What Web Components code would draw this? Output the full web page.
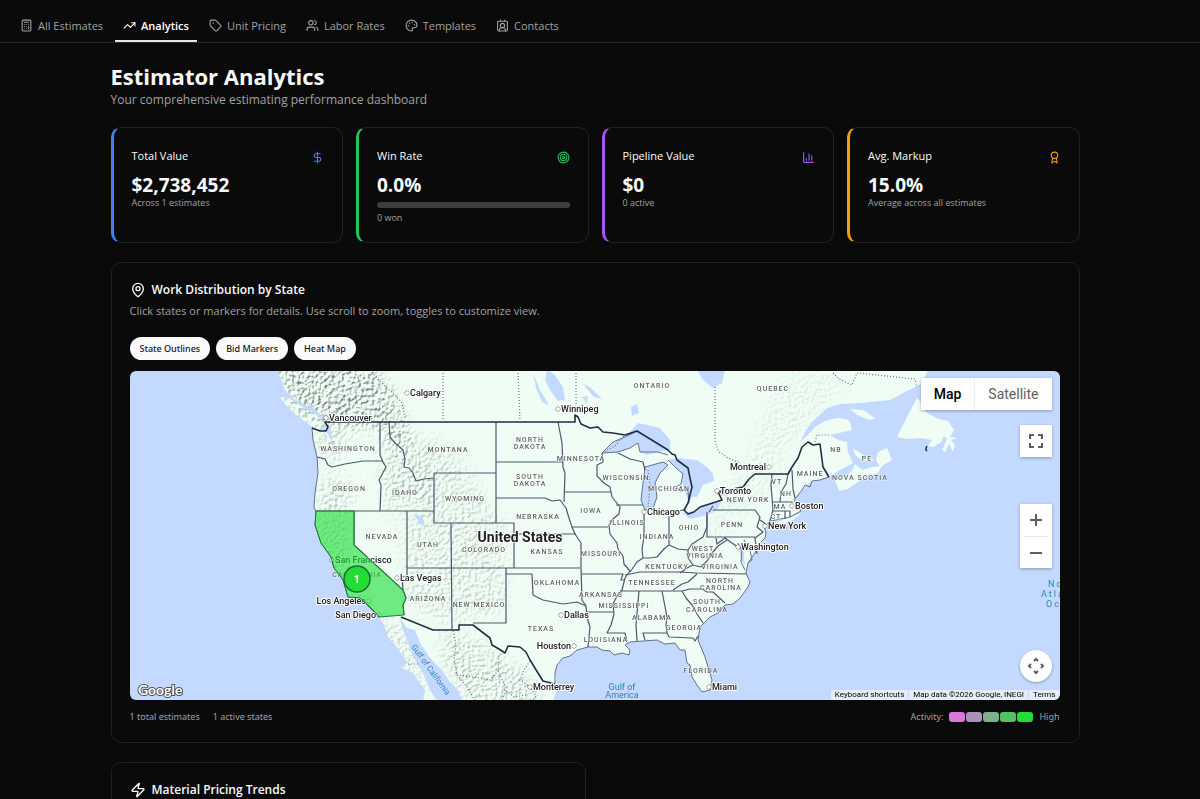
<!DOCTYPE html>
<html lang="en">
  <head>
    <meta charset="utf-8" />
    <meta name="viewport" content="width=device-width, initial-scale=1" />
    <title>Estimator Analytics</title>
    <style>
      body {
        margin: 0;
        height: 100vh;
        overflow: hidden;
        background: #0a0a0a;
        color: #fafafa;
        font-family: "Open Sans", "Noto Sans", sans-serif;
      }
    </style>
  </head>
  <body>
    <app-nav>
      <nav-tab icon="calculator">All Estimates</nav-tab>
      <nav-tab icon="trending-up" active>Analytics</nav-tab>
      <nav-tab icon="tag">Unit Pricing</nav-tab>
      <nav-tab icon="users">Labor Rates</nav-tab>
      <nav-tab icon="palette">Templates</nav-tab>
      <nav-tab icon="contact">Contacts</nav-tab>
    </app-nav>

    <analytics-page>
      <span slot="title">Estimator Analytics</span>
      <span slot="subtitle">Your comprehensive estimating performance dashboard</span>

      <stat-card slot="stats" icon="dollar" style="--accent: #3b82f6" label="Total Value" value="$2,738,452">Across 1 estimates</stat-card>
      <stat-card slot="stats" icon="target" style="--accent: #22c55e" label="Win Rate" value="0.0%" progress="0">0 won</stat-card>
      <stat-card slot="stats" icon="chart" style="--accent: #a855f7" label="Pipeline Value" value="$0">0 active</stat-card>
      <stat-card slot="stats" icon="award" style="--accent: #f59e0b" label="Avg. Markup" value="15.0%">Average across all estimates</stat-card>

      <panel-card icon="map-pin" heading="Work Distribution by State">
        <span slot="description">Click states or markers for details. Use scroll to zoom, toggles to customize view.</span>
        <work-map></work-map>
      </panel-card>

      <panel-card slot="half" icon="zap" heading="Material Pricing Trends"></panel-card>
    </analytics-page>

    <script>
      const ICONS = {
        'calculator': '<rect width="16" height="20" x="4" y="2" rx="2"/><path d="M8 6h8M16 14v4M16 10h.01M12 10h.01M8 10h.01M12 14h.01M8 14h.01M12 18h.01M8 18h.01"/>',
        'trending-up': '<path d="m22 7-8.5 8.5-5-5L2 17"/><path d="M16 7h6v6"/>',
        'tag': '<path d="M12.586 2.586A2 2 0 0 0 11.172 2H4a2 2 0 0 0-2 2v7.172a2 2 0 0 0 .586 1.414l8.704 8.704a2.426 2.426 0 0 0 3.42 0l6.58-6.58a2.426 2.426 0 0 0 0-3.42z"/><circle cx="7.500" cy="7.500" r=".5" fill="currentColor"/>',
        'users': '<path d="M16 21v-2a4 4 0 0 0-4-4H6a4 4 0 0 0-4 4v2"/><circle cx="9" cy="7" r="4"/><path d="M22 21v-2a4 4 0 0 0-3-3.870M16 3.130a4 4 0 0 1 0 7.750"/>',
        'palette': '<path d="M12 22a1 1 0 0 1 0-20 10 9 0 0 1 10 9 5 5 0 0 1-5 5h-2.250a1.750 1.750 0 0 0-1.400 2.800l.3.400a1.750 1.750 0 0 1-1.400 2.800z"/><circle cx="13.500" cy="6.500" r=".5" fill="currentColor"/><circle cx="17.500" cy="10.500" r=".5" fill="currentColor"/><circle cx="6.500" cy="12.500" r=".5" fill="currentColor"/><circle cx="8.500" cy="7.500" r=".5" fill="currentColor"/>',
        'contact': '<path d="M16 2v2M8 2v2M17.915 22a6 6 0 0 0-12 0"/><circle cx="12" cy="12" r="4"/><rect x="3" y="4" width="18" height="18" rx="2"/>',
        'dollar': '<path d="M12 2v20M17 5H9.500a3.500 3.500 0 0 0 0 7h5a3.500 3.500 0 0 1 0 7H6"/>',
        'target': '<circle cx="12" cy="12" r="10"/><circle cx="12" cy="12" r="6"/><circle cx="12" cy="12" r="2"/>',
        'chart': '<path d="M3 3v16a2 2 0 0 0 2 2h16M18 17V9M13 17V5M8 17v-3"/>',
        'award': '<path d="m15.477 12.890 1.515 8.526a.5.5 0 0 1-.81.470l-3.580-2.687a1 1 0 0 0-1.197 0l-3.586 2.686a.5.5 0 0 1-.81-.469l1.514-8.526"/><circle cx="12" cy="8" r="6"/>',
        'map-pin': '<path d="M20 10c0 4.993-5.539 10.193-7.399 11.799a1 1 0 0 1-1.202 0C9.539 20.193 4 14.993 4 10a8 8 0 0 1 16 0"/><circle cx="12" cy="10" r="3"/>',
        'zap': '<path d="M4 14a1 1 0 0 1-.78-1.630l9.900-10.200a.5.5 0 0 1 .86.460l-1.920 6.020A1 1 0 0 0 13 10h7a1 1 0 0 1 .78 1.630l-9.900 10.200a.5.5 0 0 1-.86-.460l1.920-6.020A1 1 0 0 0 11 14z"/>',
      };

      class UiIcon extends HTMLElement {
        constructor() {
          super();
          this.attachShadow({mode: 'open'}).innerHTML = `
            <style>
              :host { display: block; width: 13px; height: 13px; flex: none; }
              svg { display: block; width: 100%; height: 100%; }
            </style>
            <svg viewBox="0 0 24 24" fill="none" stroke="currentColor" stroke-width="2"
                 stroke-linecap="round" stroke-linejoin="round" aria-hidden="true">
              ${ICONS[this.getAttribute('name')] || ''}
            </svg>
          `;
        }
      }

      class AppNav extends HTMLElement {
        constructor() {
          super();
          this.attachShadow({mode: 'open'}).innerHTML = `
            <style>
              :host { display: block; border-bottom: 1px solid #262626; }
              nav { display: flex; gap: 4px; padding: 11px 12px 0; }
            </style>
            <nav><slot></slot></nav>
          `;
        }
      }

      class NavTab extends HTMLElement {
        constructor() {
          super();
          this.attachShadow({mode: 'open'}).innerHTML = `
            <style>
              :host { display: block; }
              a {
                display: flex;
                align-items: center;
                gap: 5px;
                height: 29px;
                padding: 0 8px;
                border-bottom: 2px solid transparent;
                color: #a1a1a1;
                font-size: 11px;
                font-weight: 500;
                line-height: 16px;
                text-decoration: none;
                white-space: nowrap;
              }
              :host([active]) a { color: #fff; font-weight: 600; border-color: #e5e5e5; }
            </style>
            <a href="#"><ui-icon name="${this.getAttribute('icon')}"></ui-icon><slot></slot></a>
          `;
        }
      }

      class AnalyticsPage extends HTMLElement {
        constructor() {
          super();
          this.attachShadow({mode: 'open'}).innerHTML = `
            <style>
              :host { display: block; padding: 18px 26px 20px 16px; }
              main { max-width: 969px; margin: 0 auto; }
              header { margin-bottom: 18px; }
              h1 { margin: 0; font-size: 22px; line-height: 30px; font-weight: 700; }
              p { margin: 0; font-size: 12px; line-height: 18px; color: #a1a1a1; }
              .stats { display: grid; grid-template-columns: repeat(4, 1fr); gap: 13px; margin-bottom: 19px; }
              .halves { display: grid; grid-template-columns: 1fr 1fr; gap: 19px; margin-top: 19px; }
            </style>
            <main>
              <header>
                <h1><slot name="title"></slot></h1>
                <p><slot name="subtitle"></slot></p>
              </header>
              <section class="stats"><slot name="stats"></slot></section>
              <slot></slot>
              <div class="halves"><slot name="half"></slot></div>
            </main>
          `;
        }
      }

      class StatCard extends HTMLElement {
        constructor() {
          super();
          const bar = this.hasAttribute('progress')
            ? `<div class="bar" role="progressbar" aria-label="Win rate" aria-valuenow="${this.getAttribute('progress')}"></div>`
            : '';
          this.attachShadow({mode: 'open'}).innerHTML = `
            <style>
              :host {
                display: block;
                box-sizing: border-box;
                min-height: 116px;
                padding: 19px 18px 18px;
                border: 1px solid #212121;
                border-left: 3px solid var(--accent);
                border-radius: 10px;
              }
              .top { display: flex; justify-content: space-between; }
              h3 { margin: 0; font-size: 11px; line-height: 18px; font-weight: 500; }
              ui-icon { margin-top: 4px; color: var(--accent); }
              .value { margin-top: 8px; font-size: 19px; line-height: 24px; font-weight: 700; }
              .bar { height: 6px; margin: 5px 0 4px; border-radius: 3px; background: #3d3d3d; }
              .note { font-size: 9px; line-height: 12px; color: #a1a1a1; }
            </style>
            <div class="top">
              <h3>${this.getAttribute('label')}</h3>
              <ui-icon name="${this.getAttribute('icon')}"></ui-icon>
            </div>
            <div class="value">${this.getAttribute('value')}</div>
            ${bar}
            <div class="note"><slot></slot></div>
          `;
        }
      }

      class PanelCard extends HTMLElement {
        constructor() {
          super();
          this.attachShadow({mode: 'open'}).innerHTML = `
            <style>
              :host {
                display: block;
                padding: 18px 19px 18px 18px;
                border: 1px solid #212121;
                border-radius: 10px;
              }
              h2 {
                display: flex;
                align-items: center;
                gap: 6px;
                margin: 0;
                font-size: 12px;
                line-height: 18px;
                font-weight: 600;
              }
              ui-icon { width: 16px; height: 16px; }
              p { margin: 3px 0 17px; font-size: 11px; line-height: 18px; color: #a1a1a1; }
            </style>
            <h2><ui-icon name="${this.getAttribute('icon')}"></ui-icon>${this.getAttribute('heading')}</h2>
            <p><slot name="description"></slot></p>
            <slot></slot>
          `;
        }
      }

      class WorkMap extends HTMLElement {
        constructor() {
          super();
          this.attachShadow({mode: 'open'}).innerHTML = `
            <style>
              :host { display: block; }
              .toggles { display: flex; gap: 6px; margin-bottom: 11px; }
              .toggles button {
                height: 23px;
                padding: 0 10px;
                border: 0;
                border-radius: 12px;
                background: #fafafa;
                color: #171717;
                font: 500 9px "Noto Sans", sans-serif;
              }
              footer {
                display: flex;
                align-items: center;
                gap: 13px;
                margin-top: 9px;
                font-family: "Noto Sans", sans-serif;
                font-size: 9px;
                line-height: 15px;
                color: #a1a1a1;
              }
              .legend { display: flex; align-items: center; gap: 6px; margin-left: auto; }
              .swatches { display: flex; gap: 1px; }
              .swatches i { width: 16px; height: 10px; border-radius: 3px; }
            </style>
            <div class="toggles">
              <button type="button" aria-pressed="true">State Outlines</button>
              <button type="button" aria-pressed="true">Bid Markers</button>
              <button type="button" aria-pressed="true">Heat Map</button>
            </div>
            <us-map></us-map>
            <footer>
              <span>1 total estimates</span>
              <span>1 active states</span>
              <div class="legend">
                <span>Activity:</span>
                <div class="swatches">
                  <i style="background: #d977dc"></i>
                  <i style="background: #ad90b6"></i>
                  <i style="background: #7fae8c"></i>
                  <i style="background: #52c263"></i>
                  <i style="background: #22dd33"></i>
                </div>
                <span>High</span>
              </div>
            </footer>
          `;
        }
      }

      // Label tables: text, x, y. Cities also carry the side their dot is on.
      const STATES = [
        ['WASHINGTON', 348, 451], ['OREGON', 349, 491], ['IDAHO', 405, 495], ['MONTANA', 448, 452],
        ['WYOMING', 465, 501], ['NEVADA', 382, 539], ['UTAH', 428, 547], ['COLORADO', 484, 552],
        ['CALIFORNIA', 357, 577], ['ARIZONA', 428, 601], ['NEW MEXICO', 479, 607], ['NORTH', 530, 442],
        ['DAKOTA', 530, 449], ['SOUTH', 530, 479], ['DAKOTA', 530, 486], ['NEBRASKA', 538, 519],
        ['KANSAS', 547, 554], ['OKLAHOMA', 557, 585], ['TEXAS', 541, 631], ['MINNESOTA', 581, 461],
        ['IOWA', 591, 513], ['MISSOURI', 601, 556], ['ARKANSAS', 601, 597], ['LOUISIANA', 606, 642],
        ['WISCONSIN', 626, 480], ['ILLINOIS', 627, 525], ['MICHIGAN', 669, 491], ['INDIANA', 657, 539],
        ['OHIO', 689, 530], ['KENTUCKY', 667, 569], ['TENNESSEE', 652, 585], ['MISSISSIPPI', 624, 608],
        ['ALABAMA', 652, 620], ['GEORGIA', 684, 630], ['FLORIDA', 701, 673], ['SOUTH', 707, 604],
        ['CAROLINA', 707, 612], ['NORTH', 720, 583], ['CAROLINA', 721, 590], ['WEST', 703, 551],
        ['VIRGINIA', 705, 558], ['VIRGINIA', 720, 569], ['PENN', 732, 527], ['NEW YORK', 748, 502],
        ['VT', 777, 484], ['NH', 786, 496], ['MA', 780, 509], ['CT', 776, 519], ['MAINE', 810, 476],
        ['NB', 836, 452], ['PE', 867, 461], ['NOVA SCOTIA', 860, 480], ['QUEBEC', 773, 391],
        ['ONTARIO', 652, 388],
      ];
      const CITIES = [
        ['Vancouver', 326, 418, 'l'], ['Calgary', 407, 393, 'l'], ['Winnipeg', 558, 409, 'l'],
        ['San Francisco', 332, 560, 'l'], ['Las Vegas', 397, 578, 'l'], ['Los Angeles', 369, 601, 'r'],
        ['San Diego', 379, 615, 'r'], ['Dallas', 561, 615, 'l'], ['Houston', 574, 646, 'r'],
        ['Monterrey', 530, 687, 'l'], ['Chicago', 644, 512, 'l'], ['Toronto', 717, 491, 'l'],
        ['Montreal', 769, 467, 'r'], ['Boston', 792, 506, 'l'], ['New York', 765, 526, 'l'],
        ['Washington', 738, 547, 'l'], ['Miami', 709, 687, 'l'],
      ];

      const stateLabels = STATES
        .map(([name, x, y]) => `<text x="${x}" y="${y}">${name}</text>`).join('');
      const cityLabels = CITIES.map(([name, x, y, side]) => `
        <circle cx="${x}" cy="${y}" r="2"/>
        <text x="${side === 'l' ? x + 3 : x - 3}" y="${y + 3}" text-anchor="${side === 'l' ? 'start' : 'end'}">${name}</text>
      `).join('');

      const LAND = `
        M277 370L280 377L285 390L297 402L306 405L313 410L322 420L325 424L327 432L320 431L312 428
        L313 440L317 457L318 473L315 493L314 507L316 512L315 525L320 537L321 543L326 550L331 557L334 568
        L343 580L348 597L360 598L368 605L375 612L379 617L385 627L388 637L395 645L402 655L408 663L400 667
        L413 673L420 683L425 690L423 701H437L430 690L423 673L413 657L407 640L402 627L400 618L407 628
        L415 630L420 643L430 658L442 670L450 682L458 690L463 701H553L558 687L555 673L557 665L563 658
        L570 656L577 650L588 647L597 647L602 650L610 651L614 655L622 653L629 655L630 650L625 645L630 642
        L643 641L657 640L665 644L675 643L680 650L685 650L687 663L690 665L692 677L697 685L702 692L710 690
        L712 680L705 657L698 640L700 627L710 617L718 613L725 605L733 604L740 598L748 587L750 582L746 573
        L748 563L755 553L758 545L765 538L766 533L764 526L771 522L780 520L790 517L795 514L801 511L796 506
        L794 500L802 490L810 482L820 480L829 477L840 470L853 463L848 452L847 442L838 440L830 435L852 430
        L850 422L846 419L837 418L825 421L815 427L807 436L800 442L806 430L812 422L827 408L840 404L860 403
        L890 400L903 393L913 388L922 383L928 370Z
        M280 397L288 398L297 403L304 408L312 412L322 420L325 428L317 430L307 423L295 414L285 404Z
        M917 398L907 417L897 437L907 439L920 438L932 440L928 446L933 447L941 442L944 436L947 439L942 450L945 452L949 444L953 452L955 445L951 440L957 438L950 437
        L954 430L948 421L938 419L926 412L920 401Z
        M855 464L862 470L872 467L882 466L878 473L866 476L858 482L848 489L839 491L835 481L846 476L852 471Z
        M878 452L887 448L892 460L880 467L876 460Z M850 409L863 410L875 418L870 420L857 415Z
        M853 448L863 455L875 460L863 461L855 455Z M768 526L785 519L802 513L793 520L776 527Z`;

      class UsMap extends HTMLElement {
        constructor() {
          super();
          this.attachShadow({mode: 'open'}).innerHTML = `
            <style>
              :host {
                display: block;
                position: relative;
                overflow: hidden;
                border-radius: 6px;
                background: #c3d9ff;
                font-family: Roboto, sans-serif;
              }
              .tiles { display: block; width: 100%; height: auto; }
              button { padding: 0; border: 0; background: #fff; color: #5f5f5f; font: 14px Roboto, sans-serif; }
              .type, .full, .zoom, .pan {
                position: absolute;
                right: 8px;
                background: #fff;
                box-shadow: 0 1px 3px rgba(0, 0, 0, .3);
              }
              .type { top: 7px; display: flex; }
              .type button { height: 32px; padding: 0 13px; }
              .type button:first-child { color: #000; font-weight: 500; }
              .type button + button { border-left: 1px solid #ebebeb; }
              .full { top: 54px; width: 32px; height: 32px; }
              .zoom { top: 133px; display: grid; width: 32px; }
              .zoom button { height: 32px; }
              .zoom button:last-child { height: 31px; }
              .zoom hr { width: 24px; margin: 0 auto; border: 0; border-top: 1px solid #e6e6e6; }
              .pan { bottom: 18px; width: 32px; height: 32px; border-radius: 50%; }
              button svg { display: block; margin: auto; }
              .credits {
                position: absolute;
                right: 0;
                bottom: 0;
                display: flex;
                gap: 1px;
                font-size: 8px;
                line-height: 10px;
              }
              .credits > * { padding: 0 4px; background: rgba(245, 245, 245, .7); color: #000; text-decoration: none; }
              .credits button { font-size: 8px; line-height: 10px; }
              .halo { paint-order: stroke; stroke: #fff; stroke-width: 2; stroke-linejoin: round; }
              .states { font-size: 7px; font-weight: 500; letter-spacing: 1px; fill: #5f6368; text-anchor: middle; stroke-width: 1; stroke-opacity: .8; }
              .cities { font-size: 9px; font-weight: 500; fill: #202124; }
              .cities circle { fill: #fff; stroke: #444; stroke-width: 1; }
              .water-labels { font-size: 9px; fill: #2e83b5; }
            </style>
            <svg class="tiles" viewBox="130 371 930 329" role="img" aria-label="Map of work by state">
              <defs>
                <clipPath id="land"><path d="${LAND}"/></clipPath>
                <filter id="relief" x="-20%" y="-20%" width="140%" height="140%" color-interpolation-filters="sRGB">
                  <feTurbulence type="fractalNoise" baseFrequency=".3" numOctaves="4" seed="7" result="noise"/>
                  <feDiffuseLighting in="noise" surfaceScale="2" lighting-color="#fff" result="lit">
                    <feDistantLight azimuth="225" elevation="45"/>
                  </feDiffuseLighting>
                  <feColorMatrix in="lit" type="matrix" values="0 0 0 0 .48  0 0 0 0 .52  0 0 0 0 .50  -2.200 0 0 0 1.600" result="shade"/>
                  <feGaussianBlur in="SourceAlpha" stdDeviation="8" result="area"/>
                  <feComposite in="shade" in2="area" operator="in"/>
                </filter>
              </defs>

              <path fill="#effdf4" d="${LAND}"/>
              <g clip-path="url(#land)">
                <g filter="url(#relief)">
                  <path d="M272 365H370L388 388L404 420L408 452L395 450L385 425L340 428L300 415Z"/>
                  <path opacity=".5" d="M318 430H343V460H318ZM382 425L405 425L430 470L433 505L385 510ZM320 480H350V560L370 600H345L318 540Z"/>
                  <path opacity=".35" d="M350 515H405V600L440 622L505 612V530L470 475L440 440L420 440V520Z"/>
                  <path opacity=".5" d="M440 635L465 635L500 655L540 690V705H470L445 660ZM380 620L400 625L428 690L425 700L385 640Z"/>
                  <path opacity=".15" d="M670 595L715 545L760 500L790 450L850 380V372H780L740 470L690 550Z"/>
                </g>
              </g>

              <g fill="#c3d9ff">
                <path d="M602 453L613 442L627 435L638 423L660 428L670 440V450L658 452L647 455L640 452L638 443L630 448L618 452Z"/>
                <path d="M645 467L663 462L668 465L660 473L655 483L657 497L653 508L645 510L641 500L643 483Z"/>
                <path d="M668 460L677 458L697 460L708 468L713 474L714 481L703 485L697 497L692 497L689 503L682 483L683 474L675 467Z"/>
                <path d="M683 513L693 511L707 505L722 501L717 510L707 515L690 519Z"/>
                <path d="M718 493L728 489L743 487L739 494L722 496Z"/>
                <path d="M547 370L554 374L563 387L565 400L558 401L550 390L545 380ZM533 373L540 390L549 405L542 402L536 388Z"/>
                <path d="M697 370H725L722 383L713 388L703 380ZM631 407L637 404L639 413L632 416ZM583 384L590 387L602 399L594 397ZM582 397L588 396L587 404Z"/>
                <path d="M415 515L422 516L425 524L420 525ZM325 423L331 428L332 442L329 437ZM738 543L743 548L745 565L741 560Z"/>
                <path d="M308 402L315 409L325 420L321 418L311 410Z"/>
              </g>

              <!-- coast of the lower 48 -->
              <g fill="none" stroke="#63718c" stroke-width="1" stroke-linejoin="round">
                <path d="M312 428L313 440L317 457L318 473L315 493L314 507L316 512L315 525L321 543L331 557L334 568L343 580L348 597L360 598L379 617"/>
                <path d="M555 684L555 673L557 665L563 658L570 656L577 650L588 647L597 647L602 650L610 651L614 655L622 653L629 655L630 650L625 645L630 642L643 641L657 640L665 644L675 643L680 650L685 650L687 663L690 665L692 677L697 685L702 692L710 690L712 680L705 657L698 640L700 627L710 617L718 613L725 605L733 604L740 598L748 587L750 582L746 573L748 563L755 553L758 545L765 538L766 533L764 526L771 521L790 517L801 511L794 500L802 490L805 485L810 487L812 481L820 480L829 477"/>
                <path d="M602 453L613 442L625 437L637 431M602 453L618 452L630 448L638 443L640 452L658 452L668 455M645 467L663 462L668 465L660 473L655 483L657 497L653 508L645 510L641 500L643 483ZM668 460L675 467L683 474L681 484L676 487L680 491L688 490L689 503"/>
                <path d="M738 543L742 551L741 562L745 570M744 540L750 550L752 560L748 563"/>
              </g>

              <!-- state lines -->
              <g fill="none" stroke="#4b5870" stroke-width="1.200" stroke-linejoin="round">
                <path d="M380 422V455L383 462L386 467L379 480L381 485L380 511M317 457L325 459L328 465L332 467L345 464L363 461L383 461M316 511H434M354 511V545L403 590M407 511V576L402 577L403 590L406 598L403 605L404 615"/>
                <path d="M389 422L390 437L395 443L403 450L405 459L404 467L409 468L413 473L416 481L424 479L433 478M434 473V523H514V568M434 473H496M496 422V523M434 523H451M451 523L452 629M407 568H580M506 568V623H473M506 574H532L533 595L543 600L553 602L563 604L577 602L586 606"/>
                <path d="M496 462H563M558 422L562 443L563 467L565 473L564 502M496 498H545L552 501L560 500L566 508L569 518L572 527L575 534L581 543L581 568L582 600L586 606L587 617L590 627L588 647M514 534H576M564 492H611M572 527H608M582 574H623L621 580L625 580M586 612H613"/>
                <path d="M602 453L603 462L597 465V476L604 483L610 487L612 497L620 507L619 514L613 519L609 525L610 534L617 543L618 549L623 556L624 564L630 571L625 578L622 590L617 596L613 604L614 614L611 625L607 633H625L627 642"/>
                <path d="M618 453L630 459L643 462L645 470M616 505H643M644 512V537L642 549L643 558L637 562L630 572M651 513L669 512L684 510M669 513V545M643 558L650 558L657 557L664 549L669 545L678 549L688 550L692 544L703 537L707 527V515"/>
                <path d="M625 575L640 572H680L697 573L747 574M620 591H682M688 550L688 558L693 565L687 568L680 573M693 565L701 567L707 561L713 552L718 546L727 540M673 590L682 584L688 582L697 574M639 591L636 625L637 641M662 591L667 617L666 625L667 633H643L645 640M667 633L669 637L693 638L695 641L698 636"/>
                <path d="M682 591L686 598L692 605L697 614L703 623M682 591L690 589L702 589L707 592H713L725 603M707 512V537H755M713 510H755L760 517L757 527L763 532L755 538L757 554M716 538L717 544L725 538L732 543L738 547M772 474L771 485L773 510L769 524M760 520L767 525M788 474L786 484L781 492L780 502M792 470L793 489L795 498M772 502H793M772 511H790V517M785 511V519M709 512L713 506"/>
              </g>
              <g fill="none" stroke="#232d42" stroke-width="1.600" stroke-linejoin="round">
                <path d="M312 428L320 431L326 431L328 427L325 422H575V415L578 417L581 424L590 428L598 427L603 432L613 433L625 435L637 431L668 450L672 454L675 455L677 460L688 468L690 478L692 487L688 503L684 510L688 514L694 512L700 507L722 500L718 492L743 487L749 479L755 474H788L792 467L798 458L802 447L808 442L813 445L820 444L823 467L829 477"/>
                <path d="M401 617L433 630H459V625H473L490 638L492 645L499 649L505 653L508 646L520 647L526 652L530 660L538 673L543 681L555 684"/>
              </g>
              <path d="M927 446l-1 2 0 2 1 1" fill="none" stroke="#232d42" stroke-width="1.500"/>

              <g fill="none" stroke="#68737a" stroke-width="1.200" stroke-dasharray="1 2">
                <path d="M370 370L378 379L387 388L395 395L402 403L405 418M443 370V421M518 370L520 421M576 370V415M715 387V442L719 452L728 458L740 463M833 373L839 379L852 385L857 373L915 379L917 387M815 442L817 435L830 435M602 453L615 446L620 440L624 436M648 470L650 485L648 508"/>
                <path d="M453 631L456 645L454 660L457 675L468 688L475 701M457 675L474 677L490 680L498 671L499 655L504 653M498 671L506 688L502 701M530 661L524 670L520 680L530 687L536 696L532 701M504 689L514 697L526 695M408 664H420"/>
              </g>

              <g class="halo states">${stateLabels}</g>
              <g class="halo cities">${cityLabels}</g>
              <text class="halo" x="520" y="542" text-anchor="middle" font-size="14" font-weight="700" fill="#202124">United States</text>
              <g class="water-labels">
                <text x="622" y="690" text-anchor="middle">Gulf of</text>
                <text x="622" y="698" text-anchor="middle">America</text>
                <text transform="translate(411 647) rotate(54)" font-size="8">Gulf of California</text>
                <g letter-spacing="2" font-size="9">
                  <text x="1048" y="587">North</text>
                  <text x="1041" y="597">Atlantic</text>
                  <text x="1046" y="607">Ocean</text>
                </g>
              </g>

              <path fill="#1fe038" fill-opacity=".62" stroke="#1d7a39" stroke-width="1"
                    d="M316 511H354V545L403 590L406 598L403 605L404 615L379 617L375 612L368 605L360 598L348 597L343 580L334 568L331 557L321 543L315 525Z"/>
              <circle cx="357" cy="579" r="13" fill="#22dd33" stroke="#1c6b3c" stroke-width="1.500"/>
              <text x="357" y="583" text-anchor="middle" font-size="11" font-weight="700" fill="#fff">1</text>
              <text x="138" y="695" font-family="Lato, sans-serif" font-size="14" font-weight="700" fill="#fff"
                    stroke="#555" stroke-width="2" paint-order="stroke">Google</text>
            </svg>

            <div class="type">
              <button type="button">Map</button>
              <button type="button">Satellite</button>
            </div>
            <button type="button" class="full" aria-label="Toggle fullscreen view">
              <svg width="16" height="16" viewBox="0 0 16 16" fill="none" stroke="#5f5f5f" stroke-width="2">
                <path d="M2 6V2H6M10 2H14V6M14 10V14H10M6 14H2V10"/>
              </svg>
            </button>
            <div class="zoom">
              <button type="button" aria-label="Zoom in">
                <svg width="14" height="14" viewBox="0 0 14 14" stroke="#5f5f5f" stroke-width="2"><path d="M1 7H13M7 1V13"/></svg>
              </button>
              <hr />
              <button type="button" aria-label="Zoom out">
                <svg width="14" height="14" viewBox="0 0 14 14" stroke="#5f5f5f" stroke-width="2"><path d="M1 7H13"/></svg>
              </button>
            </div>
            <button type="button" class="pan" aria-label="Map camera controls">
              <svg width="20" height="20" viewBox="0 0 20 20" fill="none" stroke="#5f5f5f" stroke-width="2">
                <path d="M8 5L10 3L12 5M8 15L10 17L12 15M5 8L3 10L5 12M15 8L17 10L15 12"/>
              </svg>
            </button>
            <div class="credits">
              <button type="button">Keyboard shortcuts</button>
              <span>Map data ©2026 Google, INEGI</span>
              <a href="#">Terms</a>
            </div>
          `;
        }
      }

      window.customElements.define('ui-icon', UiIcon);
      window.customElements.define('app-nav', AppNav);
      window.customElements.define('nav-tab', NavTab);
      window.customElements.define('us-map', UsMap);
      window.customElements.define('work-map', WorkMap);
      window.customElements.define('stat-card', StatCard);
      window.customElements.define('panel-card', PanelCard);
      window.customElements.define('analytics-page', AnalyticsPage);
    </script>
  </body>
</html>
